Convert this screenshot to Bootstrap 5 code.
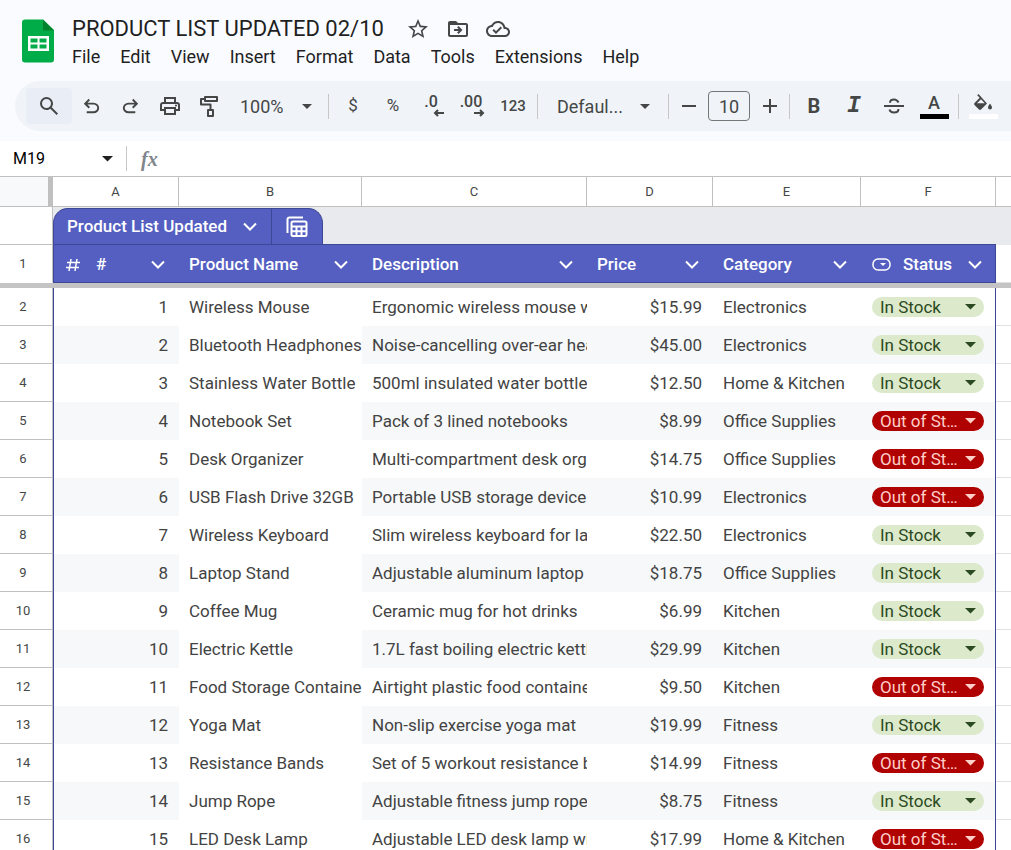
<!DOCTYPE html>
<html lang="en">
<head>
<meta charset="utf-8">
<meta name="viewport" content="width=device-width, initial-scale=1">
<title>PRODUCT LIST UPDATED 02/10</title>
<link href="https://cdn.jsdelivr.net/npm/bootstrap@5.3.0/dist/css/bootstrap.min.css" rel="stylesheet">
<style>
  :root { --line: #c0c0c0; --ink: #444746; --brand: #545fc1; --brand-edge: #3c4795; }
  body { font-family: Roboto, "Liberation Sans", sans-serif; background: #f9fbff; color: #1f1f1f; }
  button, select, input { font-family: inherit; color: inherit; border: 0; background: transparent; padding: 0; margin: 0; }
  select { appearance: none; background-repeat: no-repeat; }
  svg { display: block; flex: none; fill: currentColor; }
  .stroke { fill: none; stroke: currentColor; stroke-width: 2; }

  .app-head { padding: 15px 21px 0; height: 81px; }
  .app-logo { margin-top: 4px; margin-right: 17px; }
  .doc-title { font-size: 22px; line-height: 28px; margin-right: 22px; }
  .title-icons { gap: 16px; color: var(--ink); }
  .menus { gap: 20px; font-size: 18px; line-height: 24px; margin-top: 2px; }
  .menus a { color: #1f1f1f; text-decoration: none; }

  .tools { height: 50px; margin-left: 15px; padding-left: 11px; background: #f0f4f9; border-radius: 25px 0 0 25px; color: var(--ink); overflow: hidden; }
  .tool { flex: none; width: 40px; height: 36px; display: flex; align-items: center; justify-content: center; font-size: 17px; }
  .tool-slim { width: 39px; }
  .tool-find { width: 46px; background: #e9eef6; border-radius: 4px; }
  .tool-step { width: 31px; }
  .divider { flex: none; width: 1px; height: 25px; background: #c7c7c7; margin: 0 4px; }
  .caret-select { flex: none; height: 36px; font-size: 18px; background-image: url("data:image/svg+xml,%3Csvg xmlns='http://www.w3.org/2000/svg' width='10' height='5'%3E%3Cpath d='M0 0h10L5 5z' fill='%23444746'/%3E%3C/svg%3E"); background-position: right 12px center; }
  .zoom-pick { width: 96px; padding-left: 12px; }
  .font-pick { width: 122px; padding: 0 40px 0 15px; text-overflow: ellipsis; overflow: hidden; white-space: nowrap; background-position: right 14px center; }
  .size-box { flex: none; width: 42px; height: 30px; border: 1px solid #747775; border-radius: 4px; text-align: center; font-size: 18px; margin: 0 4px; }
  .swatch { flex-direction: column; gap: 1px; }
  .swatch i { display: block; width: 29px; height: 5px; background: currentColor; }
  .letter { font-size: 18px; line-height: 20px; font-weight: 500; }
  .mono { font: italic bold 23px/24px "Liberation Mono", monospace; }
  .decimals { flex-direction: column; align-items: center; font-size: 16px; line-height: 14px; font-weight: 500; padding-right: 4px; }
  .decimals svg { margin-left: 16px; }
  .format-more { font-size: 15px; font-weight: 500; }

  .formula { margin-top: 10px; height: 35px; background: #fff; flex: none; }
  .name-box { width: 98px; font-size: 16px; color: #000; padding-left: 13px; }
  .fx { font: italic bold 20px/24px "Liberation Serif", serif; color: #80868b; margin: 0 10px; }

  .sheet { background: #fff; border-top: 1px solid var(--line); }
  .sheet table { table-layout: fixed; width: 100%; border-collapse: separate; border-spacing: 0; }
  .sheet th, .sheet td { padding: 0; font-weight: 400; overflow: hidden; white-space: nowrap; height: 38px; vertical-align: middle; }
  .letters th { height: 30px !important; font-size: 13px; text-align: center; color: var(--ink); border-right: 1px solid var(--line); border-bottom: 1px solid var(--line); }
  .letters th:last-child { border-right: 0; }
  .letters .corner { border-right: 5px solid var(--line); background: #f8f9fa; }
  .sheet .row-no { font-size: 13px; text-align: center; color: var(--ink); padding-right: 6px; border-right: 1px solid var(--line); border-bottom: 1px solid var(--line); }
  .tab-row td { background: #e8eaed; vertical-align: bottom; }
  .sheet .tab-row .tab-cell { border-bottom: 1px solid var(--brand-edge); }
  .table-tab { width: 270px; height: 36px; background: var(--brand); border: 1px solid var(--brand-edge); border-bottom: 0; border-radius: 15px 15px 0 0; color: #fff; }
  .table-tab .tab-name { width: 218px; height: 35px; padding: 0 14px 0 13px; font-size: 17px; font-weight: 500; border-right: 1px solid var(--brand-edge); }
  .table-tab .tab-view { flex: 1; height: 35px; display: flex; align-items: center; justify-content: center; }
  .fields td { border-bottom: 1px solid #e1e1e1; }
  .sheet .fields .field { background: var(--brand); color: #fff; font-size: 17px; font-weight: 500; border-bottom: 1px solid var(--brand-edge); padding: 2px 14px 0 10px; }
  .sheet .fields .row-no { border-bottom-color: transparent; }
  .sheet .fields .field:nth-child(2) { border-left: 1px solid var(--brand-edge); padding-left: 12px; }
  .sheet .fields .field:nth-child(7) { border-right: 1px solid var(--brand-edge); padding-right: 13px; padding-left: 11px; }
  .sheet .freeze td { height: 5px; background: #c4c4c4; }
  .items td { font-size: 17px; color: #434343; }
  .items .pad { padding: 2px 0 0 10px; }
  .items .num { text-align: right; padding: 2px 11px 0 0; }
  .items .first { border-left: 1px solid var(--brand-edge); }
  .items .state { border-right: 1px solid var(--brand-edge); padding: 0 11px; }
  .items .blank { border-bottom: 1px solid #e1e1e1; }
  .items tr:nth-child(even) td:not(.product):not(.blank) { background: #f6f8f9; }
  .chip { display: block; width: 100%; height: 20px; border-radius: 10px; font-size: 17px; line-height: 20px; padding: 0 22px 0 8px; text-overflow: ellipsis; overflow: hidden; white-space: nowrap; background-position: right 8px center; }
  .chip-in { background-color: #dce9cb; color: #2b4a22; background-image: url("data:image/svg+xml,%3Csvg xmlns='http://www.w3.org/2000/svg' width='11' height='6'%3E%3Cpath d='M0 0h11L5.500 5.500z' fill='%232b4a22'/%3E%3C/svg%3E"); }
  .chip-out { background-color: #b10202; color: #ffcfc9; background-image: url("data:image/svg+xml,%3Csvg xmlns='http://www.w3.org/2000/svg' width='11' height='6'%3E%3Cpath d='M0 0h11L5.500 5.500z' fill='%23ffcfc9'/%3E%3C/svg%3E"); }
</style>
</head>
<body>
<div class="vh-100 d-flex flex-column overflow-hidden">
  <header class="app-head d-flex align-items-start flex-shrink-0">
    <svg class="app-logo" width="34" height="44" viewBox="0 0 34 44" aria-label="Sheets" role="img">
      <path d="M4 0.500h18L33 11v29.500a3 3 0 0 1-3 3H4a3 3 0 0 1-3-3v-37a3 3 0 0 1 3-3z" fill="#00ac47"/>
      <path d="M22 .500 33 11.500H22z" fill="#00832d"/>
      <path fill="#fff" fill-rule="evenodd" d="M7 17h21v15H7zM9.500 19.500v4h7v-4zM18.500 19.500v4h7v-4zM9.500 25.500v4h7v-4zM18.500 25.500v4h7v-4z"/>
    </svg>
    <div>
      <div class="d-flex align-items-center">
        <h1 class="doc-title mb-0 fw-normal">PRODUCT LIST UPDATED 02/10</h1>
        <div class="title-icons d-flex">
          <button aria-label="Star"><svg width="24" height="24" viewBox="0 0 24 24"><path d="M22 9.240l-7.190-.620L12 2 9.190 8.630 2 9.240l5.460 4.730L5.820 21 12 17.270 18.180 21l-1.630-7.030L22 9.240zM12 15.400l-3.760 2.270 1-4.280-3.320-2.880 4.380-.380L12 6.100l1.710 4.040 4.380.380-3.320 2.880 1 4.280L12 15.400z"/></svg></button>
          <button aria-label="Move"><svg width="24" height="24" viewBox="0 0 24 24"><path d="M20 6h-8l-2-2H4c-1.100 0-1.990.900-1.990 2L2 18c0 1.100.900 2 2 2h16c1.100 0 2-.900 2-2V8c0-1.100-.900-2-2-2zm0 12H4V8h16v10zm-7.500-1L16.500 13 12.500 9 11.100 10.400 12.700 12H8v2h4.700l-1.600 1.600z"/></svg></button>
          <button aria-label="Saved to cloud"><svg width="24" height="24" viewBox="0 0 24 24"><path d="M19.350 10.040C18.670 6.590 15.640 4 12 4 9.110 4 6.600 5.640 5.350 8.040 2.340 8.360 0 10.910 0 14c0 3.310 2.690 6 6 6h13c2.760 0 5-2.240 5-5 0-2.640-2.050-4.780-4.650-4.960zM19 18H6c-2.210 0-4-1.790-4-4 0-2.050 1.530-3.760 3.560-3.970l1.070-.110.500-.950C8.080 7.140 9.940 6 12 6c2.620 0 4.880 1.860 5.390 4.430l.300 1.500 1.530.110c1.560.100 2.780 1.410 2.780 2.960 0 1.650-1.350 3-3 3zm-9-3.820l-2.090-2.090L6.500 13.500 10 17l6.010-6.010-1.410-1.410z"/></svg></button>
        </div>
      </div>
      <nav class="menus d-flex" aria-label="Menu bar">
        <a href="#">File</a><a href="#">Edit</a><a href="#">View</a><a href="#">Insert</a><a href="#">Format</a><a href="#">Data</a><a href="#">Tools</a><a href="#">Extensions</a><a href="#">Help</a>
      </nav>
    </div>
  </header>

  <div class="tools d-flex align-items-center flex-shrink-0" role="toolbar" aria-label="Formatting">
    <button class="tool tool-find" aria-label="Search"><svg width="24" height="24" viewBox="0 -960 960 960"><path d="M784-120 532-372q-30 24-69 38t-83 14q-109 0-184.500-75.500T120-580q0-109 75.500-184.500T380-840q109 0 184.500 75.500T640-580q0 44-14 83t-38 69l252 252-56 56ZM380-400q75 0 127.500-52.500T560-580q0-75-52.500-127.500T380-760q-75 0-127.500 52.500T200-580q0 75 52.500 127.500T380-400Z"/></svg></button>
    <button class="tool tool-slim" aria-label="Undo"><svg width="23" height="23" viewBox="0 -960 960 960"><path d="M280-200v-80h284q63 0 109.500-40T720-420q0-60-46.500-100T564-560H312l104 104-56 56-200-200 200-200 56 56-104 104h252q97 0 166.500 63T800-420q0 94-69.500 157T564-200H280Z"/></svg></button>
    <button class="tool tool-slim" aria-label="Redo"><svg width="23" height="23" viewBox="0 -960 960 960"><path d="M396-200q-97 0-166.500-63T160-420q0-94 69.500-157T396-640h252L544-744l56-56 200 200-200 200-56-56 104-104H396q-63 0-109.500 40T240-420q0 60 46.500 100T396-280h284v80H396Z"/></svg></button>
    <button class="tool tool-slim" aria-label="Print"><svg width="24" height="24" viewBox="0 -960 960 960"><path d="M640-640v-120H320v120h-80v-200h480v200h-80Zm-480 80h640-640Zm560 100q17 0 28.500-11.500T760-500q0-17-11.500-28.500T720-540q-17 0-28.500 11.500T680-500q0 17 11.500 28.500T720-460Zm-80 260v-160H320v160h320Zm80 80H240v-160H80v-240q0-51 35-85.500t85-34.500h560q51 0 85.500 34.500T880-520v240H720v160Zm80-240v-160q0-17-11.500-28.500T760-560H200q-17 0-28.500 11.500T160-520v160h80v-80h480v80h80Z"/></svg></button>
    <button class="tool tool-slim" aria-label="Paint format"><svg class="stroke" width="24" height="24" viewBox="0 0 24 24"><path d="M8 3h12v4H8zM8 5H4v5.500h9.500V16M11 16h5v6h-5z" stroke-linejoin="round"/></svg></button>
    <select class="caret-select zoom-pick" aria-label="Zoom"><option>100%</option><option>75%</option></select>
    <span class="divider"></span>
    <button class="tool" aria-label="Currency">$</button>
    <button class="tool" aria-label="Percent">%</button>
    <button class="tool decimals" aria-label="Decrease decimals">.0<svg class="stroke" width="12" height="8" viewBox="0 0 12 8"><path d="M11 4H2M5 1 2 4l3 3"/></svg></button>
    <button class="tool decimals" aria-label="Increase decimals">.00<svg class="stroke" width="12" height="8" viewBox="0 0 12 8"><path d="M1 4h9M7 1l3 3-3 3"/></svg></button>
    <button class="tool format-more" aria-label="More formats">123</button>
    <span class="divider"></span>
    <select class="caret-select font-pick" aria-label="Font"><option>Defaul...</option><option>Arial</option></select>
    <span class="divider"></span>
    <button class="tool tool-step" aria-label="Decrease font size"><svg class="stroke" width="14" height="14" viewBox="0 0 14 14"><path d="M0 7h14"/></svg></button>
    <input class="size-box" aria-label="Font size" value="10">
    <button class="tool tool-step" aria-label="Increase font size"><svg class="stroke" width="14" height="14" viewBox="0 0 14 14"><path d="M0 7h14M7 0v14"/></svg></button>
    <span class="divider"></span>
    <button class="tool" aria-label="Bold"><b class="fs-5">B</b></button>
    <button class="tool" aria-label="Italic"><span class="mono">I</span></button>
    <button class="tool" aria-label="Strikethrough"><svg class="stroke" width="20" height="18" viewBox="0 0 20 18"><path d="M0 9h20M14.500 5.500C13.500 3.500 12 2.500 10 2.500S6 3.500 6 5.800M5.500 12.500C6 14.500 7.500 15.500 10 15.500s4.500-1.200 4.500-3.500"/></svg></button>
    <button class="tool swatch" aria-label="Text color"><span class="letter">A</span><i class="text-black"></i></button>
    <span class="divider"></span>
    <button class="tool swatch" aria-label="Fill color"><svg width="20" height="20" viewBox="0 0 20 20"><path d="M5.500 1 4.200 2.300l2.500 2.500L1.500 10a1.500 1.500 0 0 0 0 2L6 16.500a1.500 1.500 0 0 0 2 0L14 10.500zM8 6.200l3.800 4H4zM17 10.800s-2 2.200-2 3.700a2 2 0 0 0 4 0c0-1.500-2-3.700-2-3.700z"/></svg><i class="text-white"></i></button>
  </div>

  <div class="formula d-flex align-items-center">
    <input class="name-box" aria-label="Name box" value="M19">
    <button aria-label="Named ranges"><svg width="12" height="6" viewBox="0 0 12 6" class="ms-1 me-2" fill="#444746"><path d="M0 0h11L5.500 5.500z"/></svg></button>
    <span class="divider"></span>
    <span class="fx">fx</span>
    <input class="flex-grow-1" aria-label="Formula">
  </div>

  <main class="sheet flex-grow-1 overflow-hidden">
    <table>
      <colgroup id="widths"></colgroup>
      <thead>
        <tr class="letters"><th class="corner"></th><th>A</th><th>B</th><th>C</th><th>D</th><th>E</th><th>F</th><th></th></tr>
        <tr class="tab-row">
          <th class="row-no"></th>
          <td class="tab-cell" colspan="6">
            <div class="table-tab d-flex align-items-center">
              <button class="tab-name d-flex align-items-center justify-content-between">Product List Updated <svg class="stroke" width="14" height="9" viewBox="0 0 14 9"><path d="M1 1.500l6 6 6-6"/></svg></button>
              <button class="tab-view" aria-label="Table views"><svg class="stroke" width="22" height="22" viewBox="0 0 22 22"><path d="M1.500 17V3a2 2 0 0 1 2-1.500H17"/><rect x="5.500" y="5.500" width="15" height="14.500" rx="1.500"/><path d="M5.500 10.500h15M5.500 15.200h15M10.500 10.500V20M15.500 10.500V20"/></svg></button>
            </div>
          </td>
          <td></td>
        </tr>
        <tr class="fields" id="fields"></tr>
        <tr class="freeze"><td colspan="8"></td></tr>
      </thead>
      <tbody class="items" id="items"></tbody>
    </table>
  </main>
</div>

<script>
const widths = [53, 126, 183, 225, 126, 148, 135];
document.getElementById('widths').innerHTML = widths.map(w => `<col style="width:${w}px">`).join('') + '<col>';

const icons = {
  '#': '<svg class="stroke me-3" width="14" height="14" viewBox="0 0 14 14"><path stroke-width="1.500" d="M5 1 3 13M11 1 9 13M1 4.500h13M0 9.500h13"/></svg>',
  'Status': '<svg class="stroke me-2" width="19" height="13" viewBox="0 0 19 13"><rect x="1" y="1" width="17" height="11" rx="5" stroke-width="1.500"/><path d="M8 5h6l-3 3z" fill="currentColor" stroke="none"/></svg><span class="me-1"></span>'
};
const fields = ['#', 'Product Name', 'Description', 'Price', 'Category', 'Status'];
document.getElementById('fields').innerHTML = '<th class="row-no">1</th>' + fields.map(f =>
  `<th class="field"><div class="d-flex align-items-center">${icons[f] || ''}<span>${f}</span>
   <button class="ms-auto" aria-label="${f} menu"><svg class="stroke" width="14" height="9" viewBox="0 0 14 9"><path d="M1 1.500l6 6 6-6"/></svg></button></div></th>`).join('') + '<td></td>';

const items = [
  ['Wireless Mouse', 'Ergonomic wireless mouse w', '15.99', 'Electronics', 1],
  ['Bluetooth Headphones', 'Noise-cancelling over-ear hea', '45.00', 'Electronics', 1],
  ['Stainless Water Bottle', '500ml insulated water bottle', '12.50', 'Home &amp; Kitchen', 1],
  ['Notebook Set', 'Pack of 3 lined notebooks', '8.99', 'Office Supplies', 0],
  ['Desk Organizer', 'Multi-compartment desk orga', '14.75', 'Office Supplies', 0],
  ['USB Flash Drive 32GB', 'Portable USB storage device', '10.99', 'Electronics', 0],
  ['Wireless Keyboard', 'Slim wireless keyboard for lap', '22.50', 'Electronics', 1],
  ['Laptop Stand', 'Adjustable aluminum laptop s', '18.75', 'Office Supplies', 1],
  ['Coffee Mug', 'Ceramic mug for hot drinks', '6.99', 'Kitchen', 1],
  ['Electric Kettle', '1.7L fast boiling electric kettl', '29.99', 'Kitchen', 1],
  ['Food Storage Container', 'Airtight plastic food containe', '9.50', 'Kitchen', 0],
  ['Yoga Mat', 'Non-slip exercise yoga mat', '19.99', 'Fitness', 1],
  ['Resistance Bands', 'Set of 5 workout resistance b', '14.99', 'Fitness', 0],
  ['Jump Rope', 'Adjustable fitness jump rope', '8.75', 'Fitness', 1],
  ['LED Desk Lamp', 'Adjustable LED desk lamp wi', '17.99', 'Home &amp; Kitchen', 0]
];
document.getElementById('items').innerHTML = items.map(([name, text, price, group, stock], i) => `
  <tr><th class="row-no" scope="row">${i + 2}</th>
    <td class="num first">${i + 1}</td><td class="pad product">${name}</td><td class="pad">${text}</td>
    <td class="num">$${price}</td><td class="pad">${group}</td>
    <td class="state"><select class="chip chip-${stock ? 'in' : 'out'}" aria-label="Status of ${name}">
      <option${stock ? ' selected' : ''}>In Stock</option><option${stock ? '' : ' selected'}>Out of Stock</option></select></td>
    <td class="blank"></td></tr>`).join('');
</script>
<script src="https://cdn.jsdelivr.net/npm/bootstrap@5.3.0/dist/js/bootstrap.bundle.min.js"></script>
</body>
</html>
